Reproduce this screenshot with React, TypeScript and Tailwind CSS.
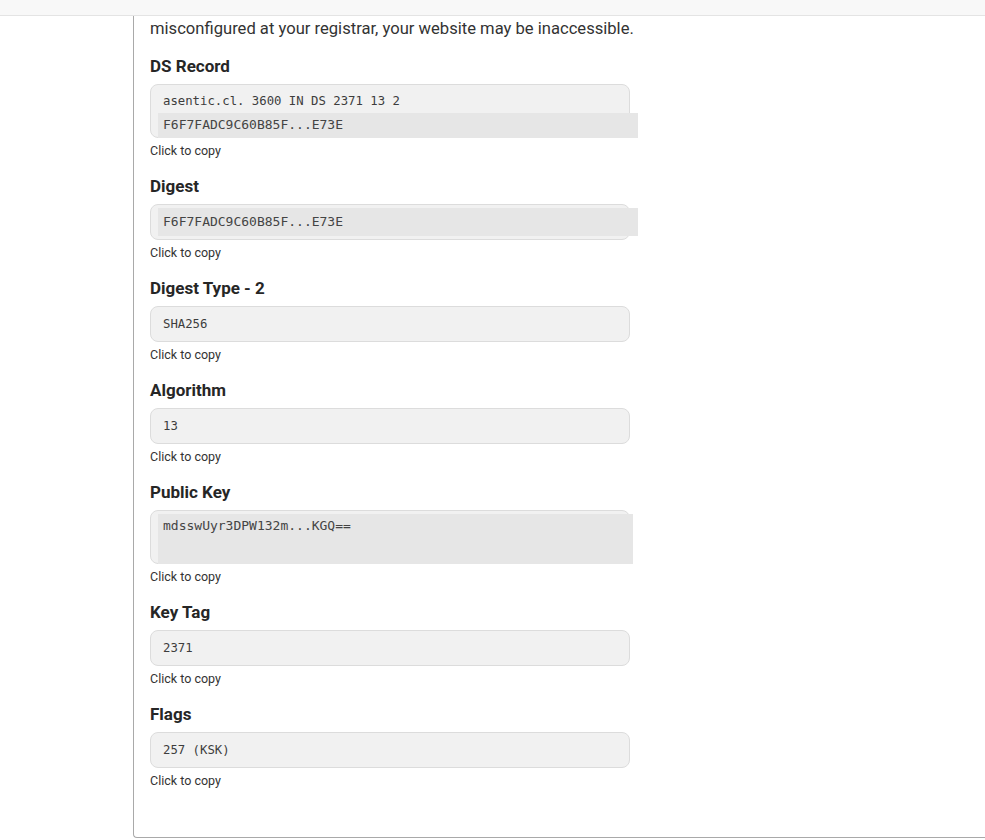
const FIELDS: Array<{ label: string; value: string; kind: 'plain' | 'inner' | 'ds' | 'key' }> = [
  { label: 'DS Record', value: 'asentic.cl. 3600 IN DS 2371 13 2', kind: 'ds' },
  { label: 'Digest', value: 'F6F7FADC9C60B85F...E73E', kind: 'inner' },
  { label: 'Digest Type - 2', value: 'SHA256', kind: 'plain' },
  { label: 'Algorithm', value: '13', kind: 'plain' },
  { label: 'Public Key', value: 'mdsswUyr3DPW132m...KGQ==', kind: 'key' },
  { label: 'Key Tag', value: '2371', kind: 'plain' },
  { label: 'Flags', value: '257 (KSK)', kind: 'plain' },
]

const mono = { fontFamily: '"DejaVu Sans Mono", "Liberation Mono", monospace' }

function ValueBox({ value, kind }: { value: string; kind: string }) {
  if (kind === 'ds') {
    return (
      <div className="w-[480px] rounded-lg border border-[#dcdcdc] bg-[#f1f1f1] pt-[6px] pl-[7px] text-[#3d3d3d]">
        <div className="pl-[5px] text-[12.3px] leading-5">{value}</div>
        <div className="relative mt-[2px] -mb-px h-[25px] w-[480px] bg-[#e6e6e6] pl-[5px] text-[13px] leading-[24px] text-[#444]">
          F6F7FADC9C60B85F...E73E
        </div>
      </div>
    )
  }
  if (kind === 'inner') {
    return (
      <div className="w-[480px] rounded-lg border border-[#dcdcdc] bg-[#f1f1f1] py-[3px] pl-[7px]">
        <div className="h-[28px] w-[480px] bg-[#e6e6e6] pl-[5px] text-[13px] leading-[28px] text-[#444]">{value}</div>
      </div>
    )
  }
  if (kind === 'key') {
    return (
      <div className="w-[480px] rounded-lg border border-[#dcdcdc] bg-[#f1f1f1] pt-[3px] pl-[7px]">
        <div className="relative -mb-px h-[50px] w-[475px] bg-[#e6e6e6] pl-[5px] pt-[2px] text-[13px] leading-5 text-[#444]">
          {value}
        </div>
      </div>
    )
  }
  return (
    <div className="w-[480px] rounded-lg border border-[#dcdcdc] bg-[#f1f1f1] px-3 py-[7px] text-[12.3px] leading-5 text-[#3d3d3d]">
      {value}
    </div>
  )
}

export default function App() {
  return (
    <div className="h-[840px] overflow-hidden bg-white" style={{ fontFamily: 'Roboto, "Noto Sans", sans-serif' }}>
      <div className="h-4 border-b border-[#e4e4e4] bg-[#f8f8f8]" />
      <div className="ml-[133px] rounded-bl border-b border-l border-[#a9a9a9] pb-[31px] pl-4 text-[#333]">
        <p className="pt-px text-[16.6px] leading-6 text-[#333]">
          misconfigured at your registrar, your website may be inaccessible.
        </p>
        <div className="mt-[15px]">
          {FIELDS.map((f) => (
            <div key={f.label} className="mb-4">
              <h3 className="mb-2 text-[17px] font-bold leading-5 text-[#262626]">{f.label}</h3>
              <div style={mono}>
                <ValueBox value={f.value} kind={f.kind} />
              </div>
              <div className="mt-1 text-[12.5px] leading-[18px] text-[#333]">Click to copy</div>
            </div>
          ))}
        </div>
      </div>
    </div>
  )
}
